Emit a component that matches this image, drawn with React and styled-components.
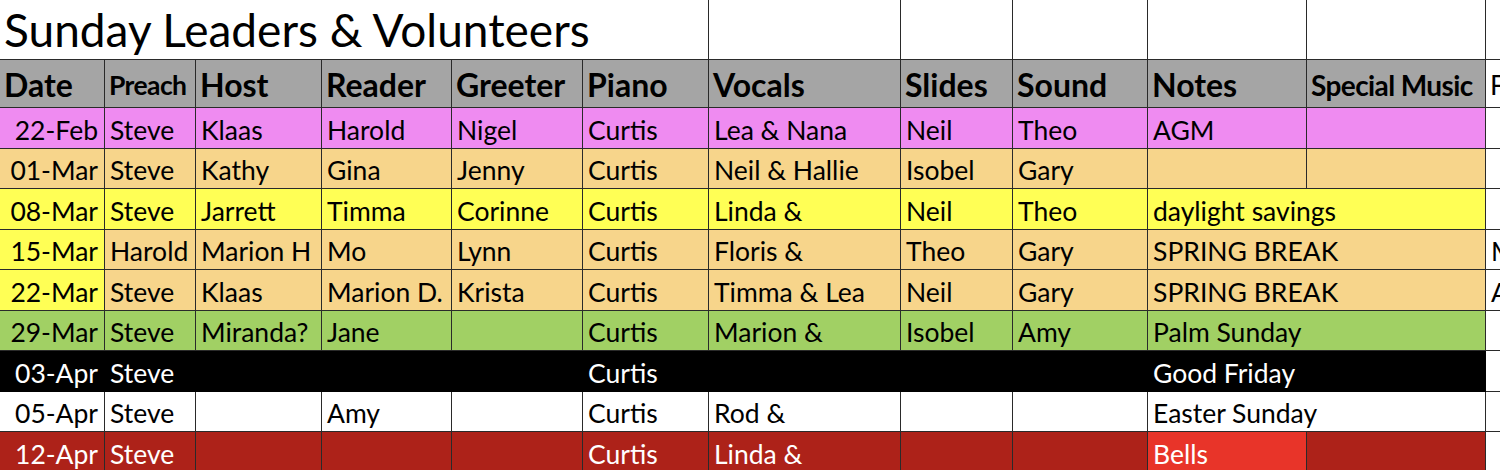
import React from 'react';
import styled, { createGlobalStyle } from 'styled-components';

const GlobalStyle = createGlobalStyle`
  html, body {
    margin: 0;
    padding: 0;
    background: #ffffff;
  }
  body {
    font-family: Lato, "Liberation Sans", sans-serif;
    color: #000;
    overflow: hidden;
  }
`;

const COLS = '105px 91px 126px 130px 131px 126px 192px 112px 135px 159px 179px 80px';
const LINE = '#2a2a2a';

const Sheet = styled.div`
  width: 1566px;
  display: flex;
  flex-direction: column;
`;

const Row = styled.div`
  display: grid;
  grid-template-columns: ${COLS};
  height: ${(p) => p.height || '40.5px'};
  background: ${(p) => p.bg || '#fff'};
  color: ${(p) => p.color || '#000'};
`;

const Cell = styled.div`
  grid-column: span ${(p) => p.span || 1};
  box-sizing: border-box;
  border-right: 1px solid ${(p) => p.line || LINE};
  border-bottom: 1px solid ${(p) => p.line || LINE};
  background: ${(p) => p.bg || 'transparent'};
  color: ${(p) => p.color || 'inherit'};
  display: flex;
  align-items: flex-end;
  justify-content: ${(p) => (p.right ? 'flex-end' : 'flex-start')};
  padding: 0 ${(p) => (p.right ? '6px' : '0')} 3px ${(p) => (p.right ? '0' : '5px')};
  font-size: 26.5px;
  line-height: 30px;
  white-space: nowrap;
  overflow: visible;
`;

const TitleCell = styled(Cell)`
  font-size: 46px;
  line-height: 52px;
  padding: 0 0 3px 4px;
`;

const HeadCell = styled(Cell)`
  background: ${(p) => p.bg || '#a5a5a5'};
  font-weight: ${(p) => p.weight || 700};
  font-size: ${(p) => p.size || 32}px;
  line-height: 36px;
  padding: 0 0 4px 4px;
  letter-spacing: ${(p) => p.tight || 0}px;
`;

const headers = [
  { t: 'Date' },
  { t: 'Preach', size: 26.5, tight: -0.6 },
  { t: 'Host' },
  { t: 'Reader' },
  { t: 'Greeter' },
  { t: 'Piano' },
  { t: 'Vocals' },
  { t: 'Slides' },
  { t: 'Sound' },
  { t: 'Notes' },
  { t: 'Special Music', size: 28, tight: -0.6 },
];

const PINK = '#ef8bf1';
const TAN = '#f7d58b';
const YELLOW = '#ffff55';
const GREEN = '#a1d064';
const RED = '#ad2219';

const rows = [
  { date: '22-Feb', bg: PINK, people: ['Steve', 'Klaas', 'Harold', 'Nigel', 'Curtis', 'Lea & Nana', 'Neil', 'Theo'], notes: 'AGM', split: true },
  { date: '01-Mar', bg: TAN, people: ['Steve', 'Kathy', 'Gina', 'Jenny', 'Curtis', 'Neil & Hallie', 'Isobel', 'Gary'], notes: '', split: true },
  { date: '08-Mar', bg: YELLOW, people: ['Steve', 'Jarrett', 'Timma', 'Corinne', 'Curtis', 'Linda &', 'Neil', 'Theo'], notes: 'daylight savings' },
  { date: '15-Mar', bg: TAN, dateBg: YELLOW, people: ['Harold', 'Marion H', 'Mo', 'Lynn', 'Curtis', 'Floris &', 'Theo', 'Gary'], notes: 'SPRING BREAK', extra: 'M' },
  { date: '22-Mar', bg: TAN, dateBg: YELLOW, people: ['Steve', 'Klaas', 'Marion D.', 'Krista', 'Curtis', 'Timma & Lea', 'Neil', 'Gary'], notes: 'SPRING BREAK', extra: 'A' },
  { date: '29-Mar', bg: GREEN, people: ['Steve', 'Miranda?', 'Jane', '', 'Curtis', 'Marion &', 'Isobel', 'Amy'], notes: 'Palm Sunday' },
  { date: '03-Apr', bg: '#000', color: '#fff', line: '#000', people: ['Steve', '', '', '', 'Curtis', '', '', ''], notes: 'Good Friday' },
  { date: '05-Apr', bg: '#fff', people: ['Steve', '', 'Amy', '', 'Curtis', 'Rod &', '', ''], notes: 'Easter Sunday' },
  { date: '12-Apr', bg: RED, color: '#fff', people: ['Steve', '', '', '', 'Curtis', 'Linda &', '', ''], notes: 'Bells', notesBg: '#e83429', split: true },
];

const App = () => {
  return (
    <>
      <GlobalStyle />
      <Sheet>
        <Row height="60px">
          <TitleCell span={6}>Sunday Leaders &amp; Volunteers</TitleCell>
          <Cell />
          <Cell />
          <Cell />
          <Cell />
          <Cell />
          <Cell />
        </Row>
        <Row height="48px">
          {headers.map((h, key) => (
            <HeadCell key={`${h.t}_${key}`} size={h.size} tight={h.tight}>
              {h.t}
            </HeadCell>
          ))}
          <HeadCell bg="#fff" size={27} weight={400}>F</HeadCell>
        </Row>
        {rows.map((r) => (
          <Row key={r.date} bg={r.bg} color={r.color}>
            <Cell right bg={r.dateBg} line={r.line}>{r.date}</Cell>
            {r.people.map((p, i) => (
              <Cell key={`${r.date}_${i}`} line={r.line}>{p}</Cell>
            ))}
            {r.split ? (
              <>
                <Cell bg={r.notesBg} line={r.line}>{r.notes}</Cell>
                <Cell line={r.line} />
              </>
            ) : (
              <Cell span={2} line={r.line}>{r.notes}</Cell>
            )}
            <Cell bg="#fff" color="#000">{r.extra}</Cell>
          </Row>
        ))}
      </Sheet>
    </>
  );
};

export default App;
